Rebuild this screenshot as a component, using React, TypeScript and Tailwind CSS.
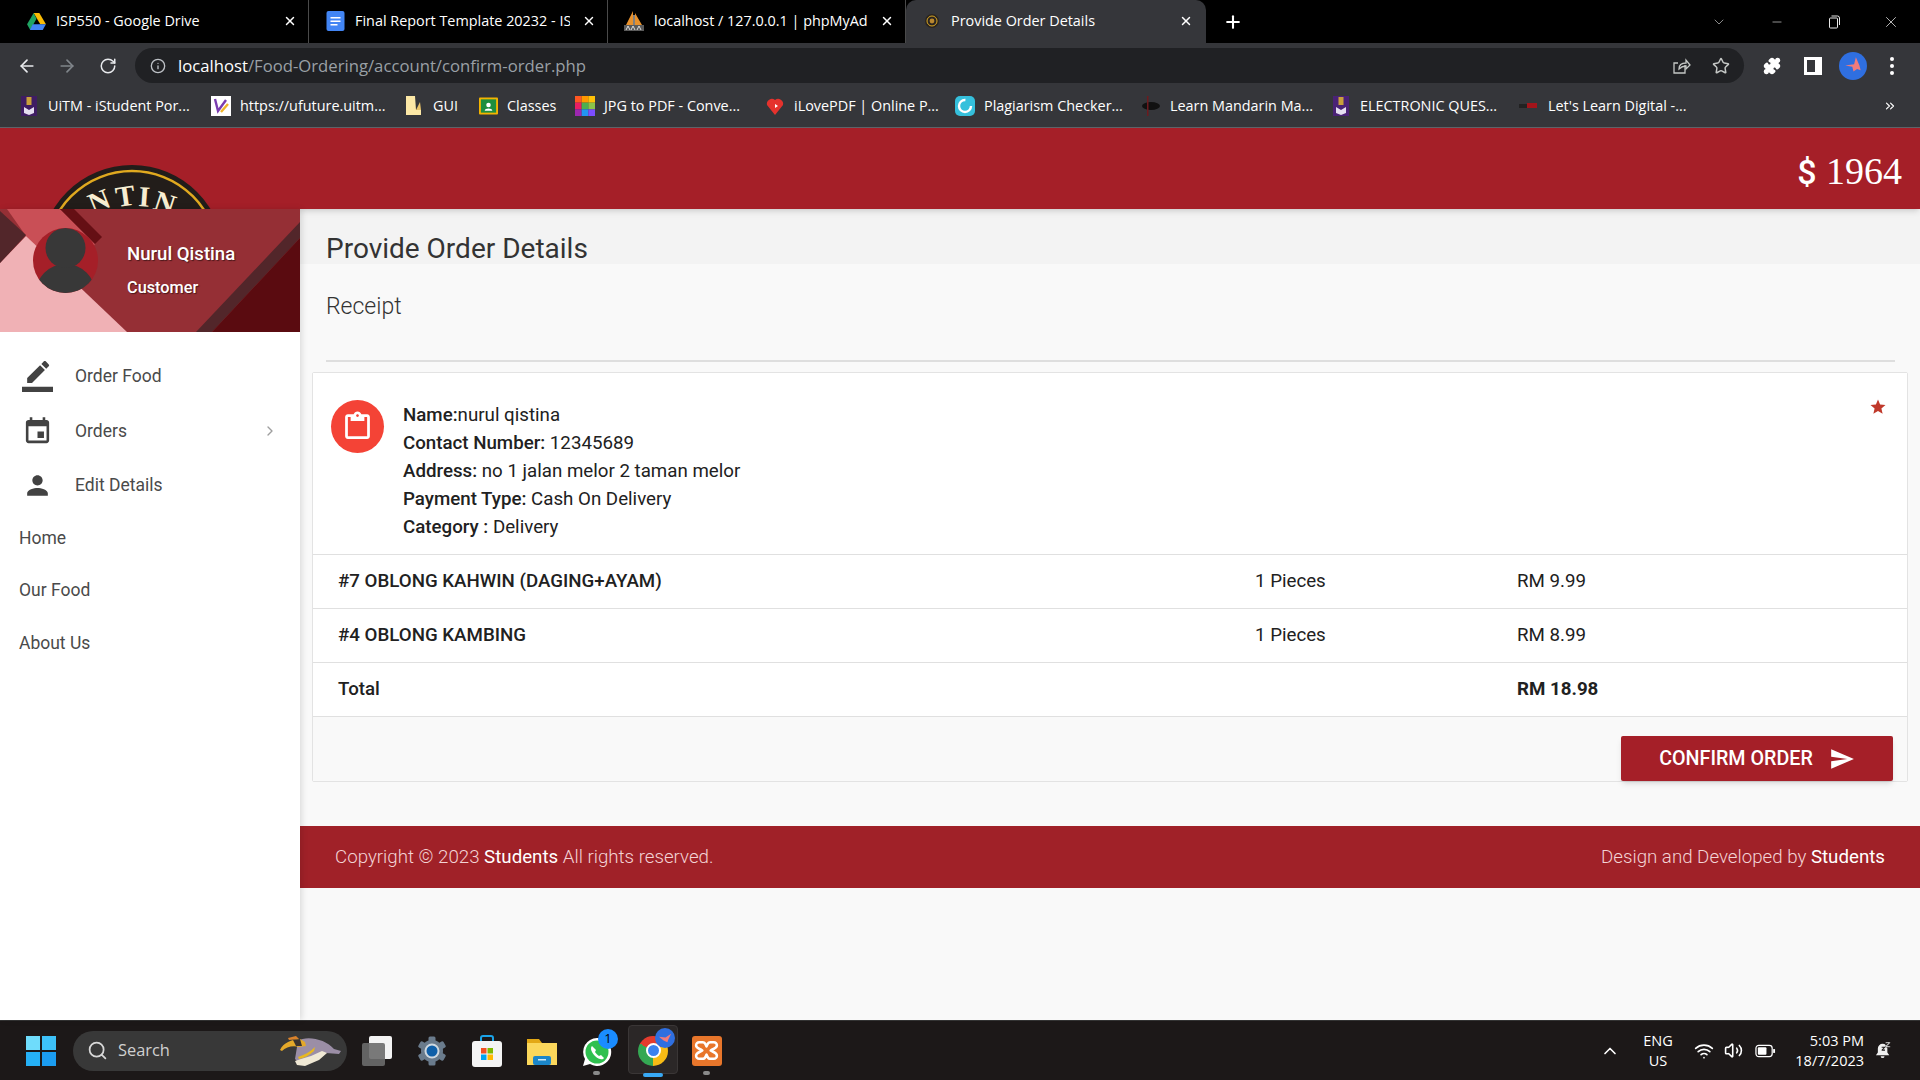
import { ArrowLeft, ArrowRight, RotateCw, Info, Star, Puzzle, Plus, X, ChevronDown, Minus, ChevronsRight, ChevronRight, ChevronUp, Search, Wifi, Volume2 } from 'lucide-react'
import type { ReactNode } from 'react'

function DriveIcon() {
  return (
    <svg viewBox="0 0 20 18" className="w-[19px] h-[17px]">
      <path d="M7 0h6l7 12h-6z" fill="#fbbc04" />
      <path d="M7 0l3 6-6.6 12L0 12z" fill="#1fa463" />
      <path d="M6 12h14l-3.4 6H3z" fill="#4285f4" />
    </svg>
  )
}

function DocsIcon() {
  return (
    <svg viewBox="0 0 18 20" className="w-[19px] h-[20px]">
      <rect width="18" height="20" rx="2" fill="#4285f4" />
      <path d="M4 6h10v1.6H4zM4 9.5h10v1.6H4zM4 13h7v1.6H4z" fill="#fff" />
    </svg>
  )
}

function PmaIcon() {
  return (
    <svg viewBox="0 0 20 20" className="w-[20px] h-[20px]">
      <path d="M9 0L2 14h7zM11 2l7 12h-7z" fill="#e8912c" />
      <path d="M10 4v10" stroke="#fff" strokeWidth="1" />
      <rect x="0" y="14" width="20" height="6" fill="#5a5a5a" />
      <path d="M2 19l2-4 2 4M7 19l2-4 2 4M13 19l2-4 2 4" stroke="#ddd" strokeWidth="1" fill="none" />
    </svg>
  )
}

function CanteenIcon() {
  return (
    <svg viewBox="0 0 14 14" className="w-[14px] h-[14px]">
      <circle cx="7" cy="7" r="7" fill="#2a2520" />
      <circle cx="7" cy="7" r="5" fill="none" stroke="#d9a520" strokeWidth="1" />
      <circle cx="7" cy="7" r="2.4" fill="#b9872f" />
    </svg>
  )
}

function CrestIcon({ color }: { color: string }) {
  return (
    <svg viewBox="0 0 16 20" className="w-[16px] h-[20px]">
      <rect width="16" height="20" fill={color} />
      <rect x="5.5" y="1" width="5" height="8" fill="#c9a13b" />
      <path d="M3 11l5 3 5-3v6l-5 2-5-2z" fill="#e5dff0" />
    </svg>
  )
}

function BookmarkIcon({ name }: { name: string }) {
  if (name === 'uitm') return <CrestIcon color="#3f1d63" />
  if (name === 'elec') return <CrestIcon color="#4a2276" />
  if (name === 'ufuture')
    return (
      <svg viewBox="0 0 20 20" className="w-[20px] h-[20px]">
        <rect width="20" height="20" fill="#fff" />
        <path d="M4 3l3 12 8-11" stroke="#7a3db0" strokeWidth="2.4" fill="none" />
        <path d="M10 16l7-8" stroke="#f0b429" strokeWidth="2.4" />
      </svg>
    )
  if (name === 'folder')
    return (
      <svg viewBox="0 0 16 20" className="w-[16px] h-[20px]">
        <path d="M0 0h9l1 14h5v5H0z" fill="#fce8a6" />
        <path d="M10 14l5 0-1-8z" fill="#e9c46a" />
      </svg>
    )
  if (name === 'classes')
    return (
      <svg viewBox="0 0 20 18" className="w-[19px] h-[18px]">
        <rect width="20" height="18" rx="1" fill="#f4b400" />
        <rect x="2" y="2" width="16" height="14" fill="#1e8e3e" />
        <circle cx="10" cy="8" r="2.4" fill="#fff" />
        <path d="M6 14c0-3 8-3 8 0z" fill="#fff" />
      </svg>
    )
  if (name === 'jpg')
    return (
      <svg viewBox="0 0 3 3" className="w-[20px] h-[20px]">
        <rect x="0" y="0" width="1" height="1" fill="#ff5722" />
        <rect x="1" y="0" width="1" height="1" fill="#ff9800" />
        <rect x="2" y="0" width="1" height="1" fill="#ffc107" />
        <rect x="0" y="1" width="1" height="1" fill="#e91e63" />
        <rect x="1" y="1" width="1" height="1" fill="#4caf50" />
        <rect x="2" y="1" width="1" height="1" fill="#8bc34a" />
        <rect x="0" y="2" width="1" height="1" fill="#9c27b0" />
        <rect x="1" y="2" width="1" height="1" fill="#2196f3" />
        <rect x="2" y="2" width="1" height="1" fill="#7c4dff" />
      </svg>
    )
  if (name === 'pdf')
    return (
      <svg viewBox="0 0 20 20" className="w-[20px] h-[20px]">
        <path d="M10 19L2 9a5 5 0 0 1 8-5 5 5 0 0 1 8 5z" fill="#e5322d" />
        <path d="M10 8l3 2-3 2z" fill="#fff" />
      </svg>
    )
  if (name === 'plag')
    return (
      <svg viewBox="0 0 20 20" className="w-[20px] h-[20px]">
        <rect width="20" height="20" rx="5" fill="#35c0dc" />
        <circle cx="10" cy="10" r="6" fill="none" stroke="#fff" strokeWidth="2.4" strokeDasharray="28 10" />
      </svg>
    )
  if (name === 'mandarin')
    return (
      <svg viewBox="0 0 20 20" className="w-[20px] h-[20px]">
        <ellipse cx="10" cy="10" rx="9" ry="4" fill="#111" />
        <rect x="6" y="0" width="1.5" height="20" fill="#6d1a1e" />
      </svg>
    )
  return (
    <svg viewBox="0 0 20 10" className="w-[20px] h-[10px]">
      <rect x="0" y="3" width="8" height="4" fill="#222" />
      <rect x="8" y="2" width="10" height="5" fill="#a3141a" />
    </svg>
  )
}

const bookmarks = [
  { name: 'uitm', label: 'UiTM - iStudent Por...', box: 'w-[192px]' },
  { name: 'ufuture', label: 'https://ufuture.uitm...', box: 'w-[193px]' },
  { name: 'folder', label: 'GUI', box: 'w-[74px]' },
  { name: 'classes', label: 'Classes', box: 'w-[97px]' },
  { name: 'jpg', label: 'JPG to PDF - Conve...', box: 'w-[190px]' },
  { name: 'pdf', label: 'iLovePDF | Online P...', box: 'w-[190px]' },
  { name: 'plag', label: 'Plagiarism Checker...', box: 'w-[186px]' },
  { name: 'mandarin', label: 'Learn Mandarin Ma...', box: 'w-[190px]' },
  { name: 'elec', label: 'ELECTRONIC QUES...', box: 'w-[188px]' },
  { name: 'digital', label: "Let's Learn Digital -...", box: 'w-[200px]' },
]

function Tab({ icon, title, box, active }: { icon: ReactNode; title: string; box: string; active?: boolean }) {
  return (
    <div className={active ? `${box} h-[43px] flex items-center pl-[16px] pr-[13px] pb-[1px] bg-[#35363a] rounded-t-[10px] self-end` : `${box} h-[43px] flex items-center pl-[16px] pr-[11px] pb-[1px] border-r border-[#4a4a4a] box-border`}>
      <div className="w-[20px] flex justify-center shrink-0">{icon}</div>
      <span className={active ? 'pl-[9px] flex-1 whitespace-nowrap overflow-hidden text-[14.4px] text-white' : 'pl-[10px] flex-1 whitespace-nowrap overflow-hidden text-[14.4px] text-white'}>{title}</span>
      <X size={14} strokeWidth={2.5} className="text-white shrink-0 ml-[12px]" />
    </div>
  )
}

function BrowserChrome() {
  return (
    <div className="font-['Open_Sans'] shrink-0">
      <div className="h-[43px] bg-black flex items-center pl-[10px]">
        <Tab box="w-[299px]" icon={<DriveIcon />} title="ISP550 - Google Drive" />
        <Tab box="w-[299px]" icon={<DocsIcon />} title="Final Report Template 20232 - ISP" />
        <Tab box="w-[298px]" icon={<PmaIcon />} title="localhost / 127.0.0.1 | phpMyAdmin" />
        <Tab box="w-[300px]" icon={<CanteenIcon />} title="Provide Order Details" active />
        <Plus size={20} strokeWidth={2.5} className="text-white ml-[17px]" />
        <div className="ml-auto flex items-center text-[#d0d0d0]">
          <ChevronDown size={16} strokeWidth={1} className="mr-[43px]" />
          <Minus size={14} strokeWidth={1.2} className="mr-[43px]" />
          <svg viewBox="0 0 14 14" className="w-[14px] h-[14px] mr-[41px]" fill="none" stroke="#e8e8e8">
            <rect x="2.5" y="3" width="8" height="10" rx="1" />
            <path d="M4.5 1h6a2 2 0 0 1 2 2v7" />
          </svg>
          <X size={18} strokeWidth={1} className="mr-[20px] text-[#f0f0f0]" />
        </div>
      </div>

      <div className="h-[48px] bg-[#35363a] flex items-center pb-[3px]">
        <ArrowLeft size={20} strokeWidth={2} className="ml-[17px] text-[#e8eaed]" />
        <ArrowRight size={20} strokeWidth={2} className="ml-[20px] text-[#80868b]" />
        <RotateCw size={18} strokeWidth={2} className="ml-[22px] text-[#e8eaed]" />
        <div className="ml-[18px] w-[1609px] h-[35px] rounded-full bg-[#202124] flex items-center pl-[15px] pr-[14px]">
          <Info size={16} className="text-[#bdc1c6]" />
          <span className="ml-[12px] text-[16.7px] text-[#9aa0a6]"><span className="text-white">localhost</span>/Food-Ordering/account/confirm-order.php</span>
          <svg viewBox="0 0 20 20" className="ml-auto w-[20px] h-[20px]" fill="none" stroke="#c4c7c5" strokeWidth="1.3">
            <path d="M14 9v8H3V7h4" />
            <path d="M8 13c0-4 3-6 7-6V4l4 5-4 4v-3c-3 0-5 1-7 3z" />
          </svg>
          <Star size={18} strokeWidth={2} className="ml-[21px] text-[#c4c7c5]" />
        </div>
        <Puzzle size={18} className="ml-[19px] text-white fill-white" />
        <svg viewBox="0 0 18 18" className="ml-[23px] w-[18px] h-[18px]">
          <path d="M0 0h18v18H0z" fill="#fff" />
          <rect x="3" y="3" width="8" height="12" fill="#35363a" />
        </svg>
        <div className="ml-[17px] w-[28px] h-[28px] rounded-full bg-[#2f6fe0] flex items-center justify-center">
          <svg viewBox="0 0 16 16" className="w-[19px] h-[19px]">
            <path d="M10 1L8.5 7 1 8l6 1 1 4 3-2 3 1-1-4z" fill="#f27b7b" />
          </svg>
        </div>
        <div className="ml-[23px] flex flex-col gap-[3px]">
          <div className="w-[4px] h-[4px] rounded-full bg-white" />
          <div className="w-[4px] h-[4px] rounded-full bg-white" />
          <div className="w-[4px] h-[4px] rounded-full bg-white" />
        </div>
      </div>

      <div className="h-[37px] bg-[#35363a] flex items-center pl-[19px] pb-[6px] border-b border-[#5f6368]">
        {bookmarks.map((b) => (
          <div key={b.name} className={`${b.box} flex items-center gap-[9px]`}>
            <div className="w-[20px] flex justify-center shrink-0"><BookmarkIcon name={b.name} /></div>
            <span className="text-[14.4px] text-white whitespace-nowrap">{b.label}</span>
          </div>
        ))}
        <ChevronsRight size={14} className="ml-auto mr-[23px] text-white" />
      </div>
    </div>
  )
}

function TopBar() {
  return (
    <div className="h-[81px] shrink-0 bg-[#a51f28] relative overflow-hidden flex items-center justify-end pr-[18px] pt-[4px] shadow-md">
      <svg viewBox="0 0 184 184" className="absolute left-[40px] top-[37px] w-[184px] h-[184px]">
        <circle cx="92" cy="92" r="92" fill="#221d1a" />
        <circle cx="92" cy="92" r="86" fill="none" stroke="#e0a91f" strokeWidth="2.5" />
        <g fill="#f8eed2" fontFamily="'Liberation Serif', serif" fontWeight="700" fontSize="29">
          <text x="53" y="49" transform="rotate(-22 53 49)">N</text>
          <text x="77" y="42" transform="rotate(-8 77 42)">T</text>
          <text x="98" y="41" transform="rotate(4 98 41)">I</text>
          <text x="112" y="44" transform="rotate(18 112 44)">N</text>
        </g>
      </svg>
      <span className="text-white text-[38px] font-['Liberation_Serif',serif] leading-none"><span className="font-['Roboto'] font-medium text-[34px]">$</span> 1964</span>
    </div>
  )
}

function ProfileCard() {
  return (
    <div className="relative h-[123px] shrink-0 overflow-hidden bg-[#952f35]">
      <svg viewBox="0 0 300 123" className="absolute inset-0 w-[300px] h-[123px]">
        <path d="M7 0h53l35 35-25 40-44-48z" fill="#c94f56" />
        <path d="M0 54l26-27 101 96H0z" fill="#f0b1b5" />
        <path d="M0 2l26 24L0 54z" fill="#52262a" />
        <path d="M60 0h14l28 28-7 7z" fill="#650f14" />
        <path d="M300 13v16l-88 94h-16z" fill="#52262a" />
        <path d="M300 29v94h-88z" fill="#5a0b10" />
        <clipPath id="avatar-clip"><circle cx="65.5" cy="51.5" r="32.5" /></clipPath>
        <g clipPath="url(#avatar-clip)">
          <rect x="30" y="15" width="70" height="72" fill="#a51f28" />
          <ellipse cx="65.5" cy="85" rx="30" ry="30" fill="#383838" />
          <circle cx="65.5" cy="39" r="20" fill="#383838" />
        </g>
      </svg>
      <div className="relative pl-[127px] pt-[33px] text-white font-['Roboto'] [text-shadow:1px_1px_1px_rgba(0,0,0,0.5)]">
        <div className="text-[18.6px] font-medium leading-[24px]">Nurul Qistina</div>
        <div className="text-[16.3px] font-medium leading-[20px] mt-[12px]">Customer</div>
      </div>
    </div>
  )
}

function MenuIcon({ d, box }: { d: string; box: string }) {
  return (
    <svg viewBox="0 0 24 24" className={box} fill="#424242">
      <path d={d} />
    </svg>
  )
}

function Sidebar() {
  return (
    <aside className="w-[300px] shrink-0 bg-white shadow-[2px_0_6px_rgba(0,0,0,0.12)] relative flex flex-col font-['Roboto'] text-[17.5px] text-[#4a4a4a]">
      <ProfileCard />
      <div className="pt-[17px]">
        <div className="h-[55px] flex items-center">
          <div className="w-[75px] pl-[22px]"><MenuIcon box="w-[31px] h-[31px]" d="M17.75 7L14 3.25l-10 10V17h3.75l10-10zm2.96-2.96c.39-.39.39-1.02 0-1.41L18.37.29c-.39-.39-1.02-.39-1.41 0L15 2.25 18.75 6l1.96-1.96zM0 20h24v4H0z" /></div>
          <span>Order Food</span>
        </div>
        <div className="h-[54px] flex items-center">
          <div className="w-[75px] pl-[22px]"><MenuIcon box="w-[31px] h-[31px]" d="M17 12h-5v5h5v-5zM16 1v2H8V1H6v2H5c-1.11 0-1.99.9-1.99 2L3 19c0 1.1.89 2 2 2h14c1.1 0 2-.9 2-2V5c0-1.1-.9-2-2-2h-1V1h-2zm3 18H5V8h14v11z" /></div>
          <span>Orders</span>
          <ChevronRight size={16} className="ml-auto mr-[22px] text-[#9e9e9e]" />
        </div>
        <div className="h-[54px] flex items-center">
          <div className="w-[75px] pl-[22px]"><MenuIcon box="w-[31px] h-[31px]" d="M12 12c2.21 0 4-1.79 4-4s-1.79-4-4-4-4 1.79-4 4 1.79 4 4 4zm0 2c-2.67 0-8 1.34-8 4v2h16v-2c0-2.66-5.33-4-8-4z" /></div>
          <span>Edit Details</span>
        </div>
        <div className="h-[52px] flex items-center pl-[19px]">Home</div>
        <div className="h-[53px] flex items-center pl-[19px]">Our Food</div>
        <div className="h-[53px] flex items-center pl-[19px]">About Us</div>
      </div>
    </aside>
  )
}

function InfoLine({ label, value }: { label: string; value: string }) {
  return (
    <div className="h-[28px] leading-[28px]">
      <span className="font-medium">{label}</span>{value}
    </div>
  )
}

function ItemRow({ name, qty, price, bold }: { name: string; qty: string; price: string; bold?: boolean }) {
  return (
    <div className="h-[54px] border-t border-[#e0e0e0] grid grid-cols-[917px_262px_1fr] items-center pl-[25px] bg-white">
      <span className="font-medium">{name}</span>
      <span>{qty}</span>
      <span className={bold ? 'font-bold' : ''}>{price}</span>
    </div>
  )
}

function ReceiptCard() {
  return (
    <div className="mx-[12px] border border-[#e3e3e3] rounded-[2px] text-[18.72px] text-[#212121]">
      <div className="relative bg-white flex pt-[27px] pl-[18px] h-[181px]">
        <div className="w-[53px] h-[53px] rounded-full bg-[#f44336] flex items-center justify-center shrink-0">
          <svg viewBox="0 0 24 24" className="w-[33px] h-[33px]" fill="#fff">
            <path d="M19 3h-4.18C14.4 1.84 13.3 1 12 1c-1.3 0-2.4.84-2.82 2H5c-1.1 0-2 .9-2 2v14c0 1.1.9 2 2 2h14c1.1 0 2-.9 2-2V5c0-1.1-.9-2-2-2zm-7 0c.55 0 1 .45 1 1s-.45 1-1 1-1-.45-1-1 .45-1 1-1zm7 16H5V5h2v3h10V5h2v14z" />
          </svg>
        </div>
        <div className="ml-[19px] mt-[1px]">
          <InfoLine label="Name:" value="nurul qistina" />
          <InfoLine label="Contact Number:" value=" 12345689" />
          <InfoLine label="Address:" value=" no 1 jalan melor 2 taman melor" />
          <InfoLine label="Payment Type:" value=" Cash On Delivery" />
          <InfoLine label="Category :" value=" Delivery" />
        </div>
        <svg viewBox="0 0 24 24" className="absolute right-[20px] top-[25px] w-[18px] h-[18px]" fill="#c0392b">
          <path d="M12 17.27L18.18 21l-1.64-7.03L22 9.24l-7.19-.61L12 2 9.19 8.63 2 9.24l5.46 4.73L5.82 21z" />
        </svg>
      </div>
      <ItemRow name="#7 OBLONG KAHWIN (DAGING+AYAM)" qty="1 Pieces" price="RM 9.99" />
      <ItemRow name="#4 OBLONG KAMBING" qty="1 Pieces" price="RM 8.99" />
      <ItemRow name="Total" qty="" price="RM 18.98" bold />
      <div className="h-[65px] border-t border-[#e0e0e0] bg-[#f9f9f9] flex justify-end items-end pr-[14px]">
        <button className="w-[272px] h-[45px] bg-[#a51f28] text-white rounded-[2px] shadow-md flex items-center justify-center font-medium text-[19.7px]">
          CONFIRM ORDER
          <svg viewBox="0 0 24 24" className="ml-[16px] w-[26px] h-[26px]" fill="#fff">
            <path d="M2.01 21L23 12 2.01 3 2 10l15 2-15 2z" />
          </svg>
        </button>
      </div>
    </div>
  )
}

function MainArea() {
  return (
    <main className="flex-1 bg-[#f9f9f9] font-['Roboto'] flex flex-col min-w-0">
      <div className="h-[55px] bg-[#f3f3f3] pl-[26px] pt-[23px] text-[28px] leading-[34px] text-[#333]">Provide Order Details</div>
      <div className="mx-[26px] mr-[25px] h-[98px] pt-[28px] border-b-2 border-[#dedede] text-[23px] font-light leading-[30px] text-[#333]">Receipt</div>
      <div className="pt-[10px]"><ReceiptCard /></div>
      <div className="mt-[44px] h-[62px] bg-[#a02128] flex items-center justify-between pl-[35px] pr-[35px] text-[18.72px] font-light text-[#f3d3d5]">
        <span>Copyright © 2023 <span className="font-normal text-white">Students</span> All rights reserved.</span>
        <span>Design and Developed by <span className="font-normal text-white">Students</span></span>
      </div>
    </main>
  )
}

function TaskIcon({ children, box }: { children: ReactNode; box: string }) {
  return <div className={`${box} relative h-[59px] flex items-center justify-center shrink-0`}>{children}</div>
}

function Taskbar() {
  return (
    <div className="h-[60px] shrink-0 bg-[#1c1818] border-t border-[#333] flex items-center font-['Open_Sans'] text-white">
      <div className="ml-[26px] w-[30px] h-[30px] grid grid-cols-2 gap-[2px] shrink-0">
        <div className="bg-[#6fdcfb]" />
        <div className="bg-[#3dc1f8]" />
        <div className="bg-[#25b0f5]" />
        <div className="bg-[#1b9cf0]" />
      </div>
      <div className="ml-[17px] w-[274px] h-[40px] rounded-full bg-[#383838] flex items-center pl-[14px] relative shrink-0">
        <Search size={21} className="text-[#d8d8d8]" />
        <span className="ml-[10px] text-[16.4px] text-[#d0d0d0]">Search</span>
        <svg viewBox="0 0 80 50" className="absolute -right-[3px] -top-[10px] w-[80px] h-[50px]">
          <path d="M28 20c8-6 28-2 36 8l7 2-2 3-13-1c-4 4-8 7-14 8l-12 3-5-5z" fill="#9b8ea6" />
          <path d="M25 40l6-2 10-3 11-5 5 2-8 7-14 6-8-1z" fill="#efe8d4" />
          <path d="M28 36c6-2 12-5 17-10l-1 4c-4 4-10 7-15 8z" fill="#e8b820" />
          <path d="M10 29c3-7 12-11 20-11l5 3 1 4-7 1c-6-2-13 0-17 4z" fill="#e4a92a" />
          <path d="M18 17l8-2 3 3-10 1z" fill="#d9822b" />
          <path d="M23 19l7-1 2 7-6 0z" fill="#3a3330" />
        </svg>
      </div>
      <div className="ml-[2px] flex items-center">
        <TaskIcon box="w-[55px]">
          <div className="w-[30px] h-[30px] relative">
            <div className="absolute right-0 top-0 w-[23px] h-[23px] rounded-[2px] bg-[#f3f3f3]" />
            <div className="absolute left-0 bottom-0 w-[23px] h-[23px] rounded-[2px] bg-[#6b6b6b]/90" />
          </div>
        </TaskIcon>
        <TaskIcon box="w-[55px]">
          <svg viewBox="0 0 30 30" className="w-[30px] h-[30px]">
            <g fill="#6a7b8c">
              <circle cx="15" cy="15" r="11" />
              <rect x="11.5" y="0.5" width="7" height="29" rx="1.5" />
              <rect x="11.5" y="0.5" width="7" height="29" rx="1.5" transform="rotate(60 15 15)" />
              <rect x="11.5" y="0.5" width="7" height="29" rx="1.5" transform="rotate(120 15 15)" />
            </g>
            <circle cx="15" cy="15" r="7.5" fill="#cfd8e0" />
            <circle cx="15" cy="15" r="5.5" fill="#0f5fa8" />
          </svg>
        </TaskIcon>
        <TaskIcon box="w-[55px]">
          <svg viewBox="0 0 30 32" className="w-[30px] h-[32px]">
            <path d="M9 7V3a2 2 0 0 1 2-2h8a2 2 0 0 1 2 2v4" fill="none" stroke="#1aa3e8" strokeWidth="2" />
            <rect x="0" y="6" width="30" height="26" rx="3" fill="#f4f4f4" />
            <rect x="9" y="13" width="5.5" height="5.5" fill="#f25022" />
            <rect x="15.5" y="13" width="5.5" height="5.5" fill="#7fba00" />
            <rect x="9" y="19.5" width="5.5" height="5.5" fill="#00a4ef" />
            <rect x="15.5" y="19.5" width="5.5" height="5.5" fill="#ffb900" />
          </svg>
        </TaskIcon>
        <TaskIcon box="w-[55px]">
          <svg viewBox="0 0 30 28" className="w-[30px] h-[28px]">
            <path d="M0 2h12l3 4h15v22H0z" fill="#e3a815" />
            <rect x="0" y="6" width="30" height="22" fill="#fbd75b" />
            <rect x="6" y="19" width="18" height="9" rx="2" fill="#1b86c9" />
            <rect x="11" y="22" width="8" height="1.5" fill="#cfeaf7" />
          </svg>
        </TaskIcon>
        <TaskIcon box="w-[55px]">
          <svg viewBox="0 0 30 32" className="w-[30px] h-[32px]">
            <path d="M15 3a14 14 0 0 0-12 21L1 31l7-2A14 14 0 1 0 15 3z" fill="#fff" />
            <circle cx="15" cy="17" r="11.5" fill="#2fc04f" />
            <path d="M10 11c-2 2-1 6 3 10s8 4 9 2l-3-3-2 1c-2-1-3-3-4-4l1-2z" fill="#fff" />
          </svg>
          <div className="absolute right-[6px] top-[8px] w-[20px] h-[20px] rounded-full bg-[#1a8cff] text-[13px] text-black flex items-center justify-center">1</div>
          <div className="absolute bottom-[5px] left-[24px] w-[7px] h-[4px] rounded-full bg-[#8a8a8a]" />
        </TaskIcon>
        <TaskIcon box="w-[50px] ml-[4px] mr-[1px]">
          <div className="absolute inset-x-0 top-[4px] bottom-[6px] rounded-[4px] bg-[#2b2727] border border-[#3a3636]" />
          <div className="relative w-[30px] h-[30px] rounded-full bg-[conic-gradient(from_300deg,#e33b2e_0_120deg,#f9bc15_120deg_240deg,#34a853_240deg_360deg)] flex items-center justify-center">
            <div className="w-[15px] h-[15px] rounded-full bg-[#3b82f0] border-2 border-white" />
          </div>
          <div className="absolute right-[3px] top-[7px] w-[20px] h-[20px] rounded-full bg-[#2f6fe0] flex items-center justify-center">
            <svg viewBox="0 0 16 16" className="w-[15px] h-[15px]"><path d="M14 3L8 7 1 6l5 4 4 2 1-3z" fill="#f27b7b" /></svg>
          </div>
          <div className="absolute bottom-[3px] left-[15px] w-[20px] h-[4px] rounded-full bg-[#38a9f5]" />
        </TaskIcon>
        <TaskIcon box="w-[55px]">
          <div className="w-[30px] h-[30px] rounded-[3px] bg-[#e8762b] flex items-center justify-center">
            <svg viewBox="0 0 24 20" className="w-[25px] h-[21px]" fill="none" stroke="#fff" strokeWidth="2.4" strokeLinejoin="round">
              <path d="M8 2a3 3 0 0 1 3 2l1 2 1-2a3 3 0 0 1 3-2h3a3 3 0 0 1 3 3c0 3-3 3-6 5 3 2 6 2 6 5a3 3 0 0 1-3 3h-3a3 3 0 0 1-3-2l-1-2-1 2a3 3 0 0 1-3 2H5a3 3 0 0 1-3-3c0-3 3-3 6-5-3-2-6-2-6-5a3 3 0 0 1 3-3z" />
            </svg>
          </div>
          <div className="absolute bottom-[5px] left-[24px] w-[7px] h-[4px] rounded-full bg-[#8a8a8a]" />
        </TaskIcon>
      </div>

      <div className="ml-auto flex items-center">
        <ChevronUp size={20} className="text-white" />
        <div className="ml-[16px] w-[44px] text-center text-[14.5px] leading-[20px]"><div>ENG</div><div>US</div></div>
        <Wifi size={20} className="ml-[14px]" />
        <Volume2 size={19} className="ml-[10px]" />
        <svg viewBox="0 0 22 14" className="ml-[12px] w-[21px] h-[14px]" fill="none" stroke="#fff" strokeWidth="1.3">
          <rect x="1" y="1" width="17" height="12" rx="3" />
          <rect x="3" y="3" width="9" height="8" rx="1" fill="#fff" stroke="none" />
          <path d="M20 5v4" strokeWidth="2" />
        </svg>
        <div className="ml-[8px] w-[80px] text-right text-[14.5px] leading-[20px] whitespace-nowrap"><div>5:03 PM</div><div>18/7/2023</div></div>
        <svg viewBox="0 0 20 20" className="ml-[11px] mr-[26px] w-[19px] h-[19px]" fill="#f0f0f0">
          <path d="M8 3a5 5 0 0 0-5 5v4l-2 3h14l-2-3V8a5 5 0 0 0-5-5z" />
          <path d="M6 16h4a2 2 0 0 1-4 0z" />
          <path d="M11 1h5v1.2l-3 3h3V6.5h-5V5.3l3-3h-3z" stroke="#1c1818" strokeWidth="0.5" />
          <path d="M7 6h3.5v1L8.5 9h2v1.2H7v-1l2-2H7z" fill="#1c1818" />
        </svg>
      </div>
    </div>
  )
}

export default function App() {
  return (
    <div className="w-[1920px] h-[1080px] flex flex-col overflow-hidden bg-[#f9f9f9]">
      <BrowserChrome />
      <TopBar />
      <div className="flex-1 flex min-h-0">
        <Sidebar />
        <MainArea />
      </div>
      <Taskbar />
    </div>
  )
}
